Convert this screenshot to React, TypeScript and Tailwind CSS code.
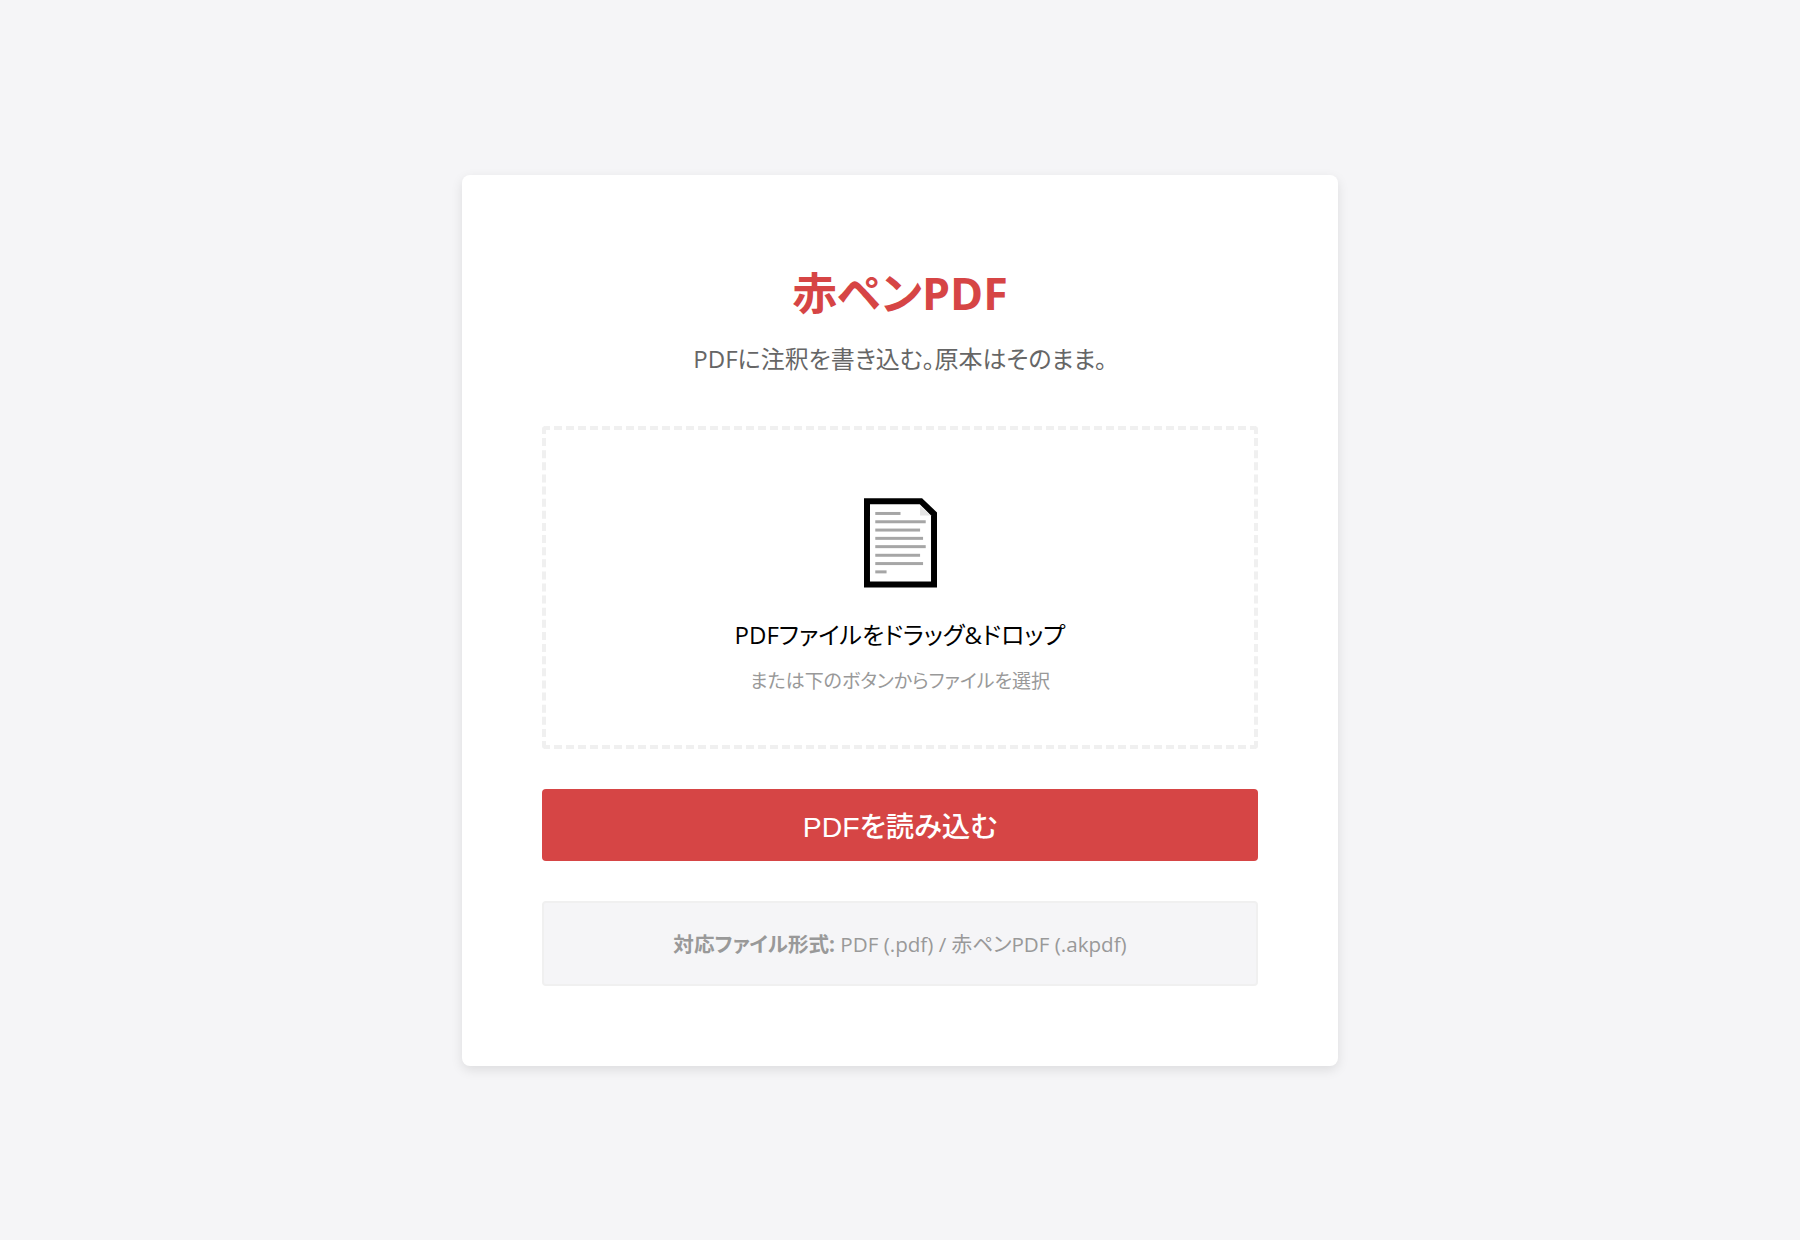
const bodyFont = "font-['Open_Sans','Noto_Sans_CJK_JP',sans-serif] [font-feature-settings:'palt']"

const lines = [
  { y: 100, x2: 240 },
  { y: 125, x2: 316 },
  { y: 150, x2: 299 },
  { y: 175, x2: 308 },
  { y: 200, x2: 316 },
  { y: 226, x2: 299 },
  { y: 251, x2: 308 },
  { y: 276, x2: 198 },
]

function DocIcon() {
  return (
    <svg width="73" height="90" viewBox="130 54 220 270" className="block">
      <polygon points="130,54 305,54 350,97 350,323 130,323" fill="#000" />
      <polygon points="148,72 298,72 332,106 332,305 148,305" fill="#fff" />
      <polygon points="299,78 332,106 299,106" fill="#e4e4e4" />
      {lines.map((line) => (
        <rect key={line.y} x="164" y={line.y - 4.5} width={line.x2 - 164} height="9" fill="#a6a6a6" />
      ))}
    </svg>
  )
}

export default function App() {
  return (
    <div className={`min-h-[1240px] bg-[#f5f5f7] flex items-center justify-center ${bodyFont}`}>
      <div className="w-[876px] bg-white rounded-lg shadow-[0_4px_12px_rgba(0,0,0,0.1)] p-20">
        <div className="text-center mb-[49px]">
          <h1 className="text-[44.8px] leading-[76px] font-bold text-[#d64545] mb-[10px]">赤ペンPDF</h1>
          <p className="text-[24px] leading-[36px] text-[#666666]">PDFに注釈を書き込む。原本はそのまま。</p>
        </div>

        {/* Drop zone */}
        <div className="h-[323px] border-4 border-dashed border-[#f0f0f0] rounded-[4px] pt-[68px] flex flex-col items-center mb-10">
          <DocIcon />
          <p className="mt-[28px] text-[24px] leading-[38px] text-[#000000]">PDFファイルをドラッグ&ドロップ</p>
          <p className="mt-[12px] text-[19px] leading-[31px] text-[#999999]">または下のボタンからファイルを選択</p>
        </div>

        <button className="w-full h-[72px] pt-[6px] bg-[#d64545] text-white rounded-[4px] text-[28.4px] font-['Liberation_Sans','Noto_Sans_CJK_JP',sans-serif] font-medium mb-10">
          PDFを読み込む
        </button>

        <div className="h-[85px] pt-[2px] bg-[#f5f5f7] border-2 border-[#f0f0f0] rounded-[4px] flex items-center justify-center text-[20.6px] text-[#999999]">
          <span><strong className="font-bold">対応ファイル形式:</strong> PDF (.pdf) / 赤ペンPDF (.akpdf)</span>
        </div>
      </div>
    </div>
  )
}
